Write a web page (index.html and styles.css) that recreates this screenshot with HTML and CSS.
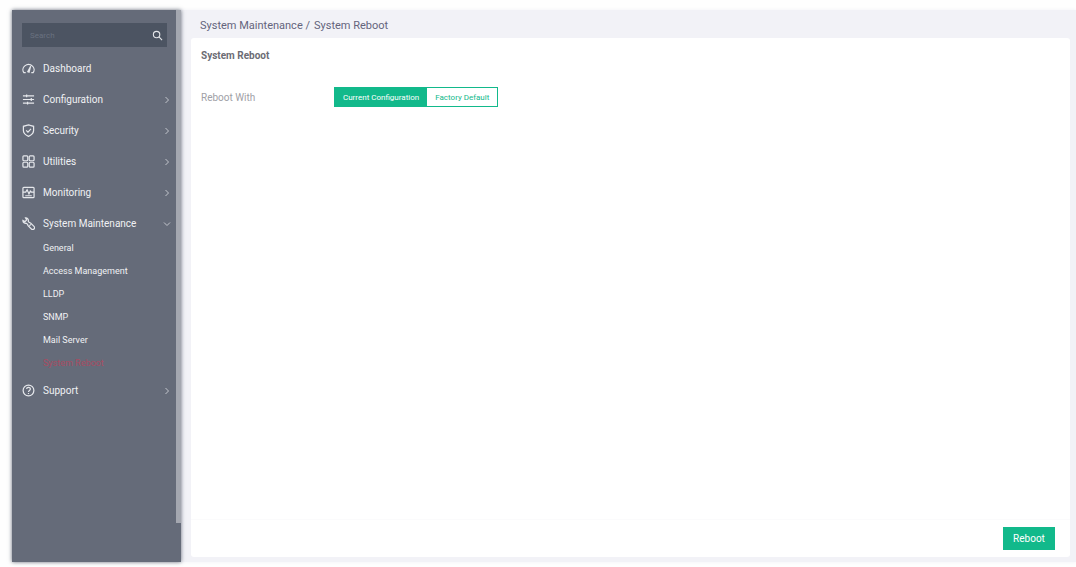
FILE: index.html
```html
<!DOCTYPE html>
<html lang="en">

<head>
    <meta charset="UTF-8">
    <meta name="viewport" content="width=device-width, initial-scale=1.0">
    <title>System Reboot</title>
    <link rel="stylesheet" href="styles.css">
</head>

<body>
    <div class="app">
        <aside class="sidebar">
            <form class="search">
                <input type="text" class="search-input" placeholder="Search" aria-label="Search">
                <button type="button" class="search-button" aria-label="Search">
                    <svg class="search-icon" viewBox="0 0 12 12"><circle cx="5" cy="5" r="3.5"/><path d="M7.6 7.6L11 11"/></svg>
                </button>
            </form>

            <nav class="menu">
                <a href="#" class="menu-item">
                    <svg class="icon" viewBox="0 0 14 14"><path d="M4 11.5H2A6 5.6 0 1 1 12 11.5H10"/><path d="M6.2 10.5L9.3 4.5L7.6 11Z"/></svg>
                    <span class="label">Dashboard</span>
                </a>
                <a href="#" class="menu-item">
                    <svg class="icon" viewBox="0 0 14 14"><path d="M1 3h12M1 7h12M1 11h12M5 1.5v3M10 5.5v3M6 9.5v3"/></svg>
                    <span class="label">Configuration</span>
                    <svg class="arrow" viewBox="0 0 8 8"><path d="M2.5 1L5.5 4L2.5 7"/></svg>
                </a>
                <a href="#" class="menu-item">
                    <svg class="icon" viewBox="0 0 14 14"><path d="M7 1L12.5 2.5V7C12.5 10 10 12 7 13.3C4 12 1.5 10 1.5 7V2.5ZM4.5 6.8L6.4 8.7L9.7 5.2"/></svg>
                    <span class="label">Security</span>
                    <svg class="arrow" viewBox="0 0 8 8"><path d="M2.5 1L5.5 4L2.5 7"/></svg>
                </a>
                <a href="#" class="menu-item">
                    <svg class="icon" viewBox="0 0 14 14"><rect x="1" y="1" width="5.2" height="5.2" rx="1"/><rect x="7.8" y="1" width="5.2" height="5.2" rx="1"/><rect x="1" y="7.8" width="5.2" height="5.2" rx="1"/><rect x="7.8" y="7.8" width="5.2" height="5.2" rx="1"/></svg>
                    <span class="label">Utilities</span>
                    <svg class="arrow" viewBox="0 0 8 8"><path d="M2.5 1L5.5 4L2.5 7"/></svg>
                </a>
                <a href="#" class="menu-item">
                    <svg class="icon" viewBox="0 0 14 14"><rect x="1" y="1.5" width="12" height="11" rx="1"/><path d="M1 6.5H4L5.5 4L7.5 8.5L9 5.5L10 6.5H13M3.5 10.5h7"/></svg>
                    <span class="label">Monitoring</span>
                    <svg class="arrow" viewBox="0 0 8 8"><path d="M2.5 1L5.5 4L2.5 7"/></svg>
                </a>
                <a href="#" class="menu-item">
                    <svg class="icon" viewBox="0 0 14 14"><path d="M3.8 1A3 3 0 0 1 6.8 4.8L8 6L9.3 6.5L12.9 10.1A1.8 1.8 0 0 1 10.1 12.9L6.5 9.3L6 8L4.8 6.8A3 3 0 0 1 1 3.8L3.2 5L5 3.2ZM8 9.5L9.5 8"/></svg>
                    <span class="label">System Maintenance</span>
                    <svg class="arrow" viewBox="0 0 8 8"><path d="M1 2.5L4 5.5L7 2.5"/></svg>
                </a>
                <div class="submenu">
                    <a href="#" class="submenu-item">General</a>
                    <a href="#" class="submenu-item">Access Management</a>
                    <a href="#" class="submenu-item">LLDP</a>
                    <a href="#" class="submenu-item">SNMP</a>
                    <a href="#" class="submenu-item">Mail Server</a>
                    <a href="#" class="submenu-item active">System Reboot</a>
                </div>
                <a href="#" class="menu-item">
                    <svg class="icon" viewBox="0 0 14 14"><circle cx="7" cy="7" r="5.8"/><path d="M5 5.5C5 3 9 3 9 5.4C9 7 7 7 7 8.5M7 9.8v1"/></svg>
                    <span class="label">Support</span>
                    <svg class="arrow" viewBox="0 0 8 8"><path d="M2.5 1L5.5 4L2.5 7"/></svg>
                </a>
            </nav>
            <div class="scroll-thumb"></div>
        </aside>

        <main class="content">
            <header class="breadcrumb">
                <span>System Maintenance /</span>
                <span>System Reboot</span>
            </header>

            <section class="panel">
                <div class="panel-body">
                    <h1 class="panel-title">System Reboot</h1>
                    <div class="field">
                        <span class="field-label" id="reboot-with">Reboot With</span>
                        <div class="toggle" role="group" aria-labelledby="reboot-with">
                            <button type="button" class="toggle-button selected">Current Configuration</button>
                            <button type="button" class="toggle-button">Factory Default</button>
                        </div>
                    </div>
                </div>
                <footer class="panel-footer">
                    <button type="button" class="reboot-button">Reboot</button>
                </footer>
            </section>
        </main>
    </div>
</body>

</html>
```

FILE: styles.css
```css
* {
    box-sizing: border-box;
}

body {
    margin: 0;
    background: #fefefe;
    font-family: Roboto, "Liberation Sans", sans-serif;
    font-size: 10px;
}

button,
input {
    font-family: inherit;
    border: 0;
    margin: 0;
}

.app {
    display: flex;
    height: 100vh;
    padding: 10px 0 5px 12px;
}

/* Sidebar */
.sidebar {
    position: relative;
    z-index: 1;
    flex: 0 0 169px;
    padding: 13px 10px 0;
    background: #656b79;
    box-shadow: 0 0 4px #656b79;
}

.search {
    display: flex;
    align-items: center;
    width: 145px;
    height: 24px;
    padding: 0 4px 0 8px;
    background: #4c5462;
}

.search-input {
    flex: 1;
    min-width: 0;
    padding: 0;
    background: none;
    color: #fff;
    font-size: 8px;
}

.search-input::placeholder {
    color: #697180;
}

.search-button {
    display: flex;
    padding: 0;
    background: none;
}

.search-icon {
    width: 11px;
    height: 11px;
    fill: none;
    stroke: #e4e6ea;
    stroke-width: 1.2;
}

.menu {
    padding-top: 8px;
}

.menu-item {
    display: flex;
    align-items: center;
    height: 27px;
    margin-bottom: 4px;
    color: #f0f1f4;
    text-decoration: none;
}

.icon {
    width: 13px;
    height: 13px;
    margin-right: 8px;
    fill: none;
    stroke: #e6e8ec;
    stroke-width: 1.3;
}

.label {
    flex: 1;
}

.arrow {
    width: 8px;
    height: 8px;
    fill: none;
    stroke: #c3c6cd;
}

.submenu {
    margin-top: -4px;
    padding: 0 0 2px 21px;
}

.submenu-item {
    display: block;
    color: #f0f1f4;
    font-size: 9px;
    line-height: 23px;
    text-decoration: none;
}

.submenu-item.active {
    color: #a84b62;
}

.scroll-thumb {
    position: absolute;
    top: 0;
    right: 0;
    width: 5px;
    height: 93%;
    background: #a4a7b0;
}

/* Content */
.content {
    display: flex;
    flex: 1;
    flex-direction: column;
    padding: 0 6px 5px 10px;
    background: #f2f2f7;
    box-shadow: 0 0 4px #f2f2f7;
}

.breadcrumb {
    display: flex;
    gap: 4px;
    padding: 8px 9px 0;
    height: 28px;
    color: #64647c;
    font-size: 11px;
    line-height: 16px;
}

.panel {
    display: flex;
    flex: 1;
    flex-direction: column;
    background: #fff;
    border-radius: 3px;
}

.panel-body {
    flex: 1;
    padding: 10px;
}

.panel-title {
    margin: 0 0 23px;
    color: #6c6c74;
    font-size: 10px;
    font-weight: 700;
    line-height: 16px;
}

.field {
    display: flex;
    align-items: center;
}

.field-label {
    width: 133px;
    color: #a0a0a6;
}

.toggle {
    display: flex;
    height: 20px;
    border: 1px solid #12b98b;
}

.toggle-button {
    padding: 0 8px;
    background: #fff;
    color: #12b98b;
    font-size: 8px;
}

.toggle-button.selected {
    background: #12b98b;
    color: #fff;
}

.panel-footer {
    display: flex;
    align-items: center;
    justify-content: flex-end;
    height: 38px;
    padding: 0 15px;
    border-top: 1px solid #fbfbfc;
}

.reboot-button {
    width: 52px;
    height: 23px;
    background: #12b98b;
    color: #fff;
    font-size: 10px;
}
```
